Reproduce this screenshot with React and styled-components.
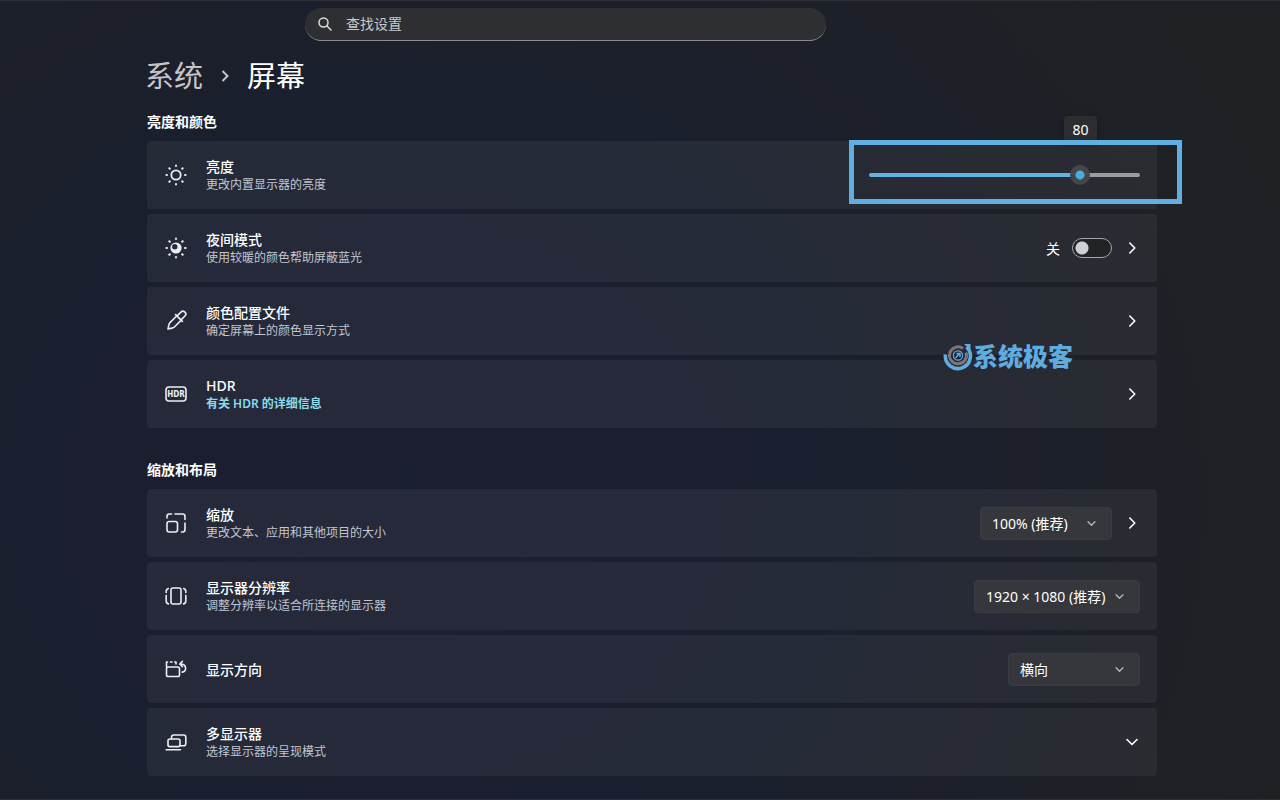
import React, { useState } from "react";
import styled, { createGlobalStyle, css } from "styled-components";

const GlobalStyle = createGlobalStyle`
  * {
    box-sizing: border-box;
  }

  body {
    margin: 0;
    background: #202124;
    color: #fff;
    font-family: "Noto Sans", "Noto Sans CJK SC", sans-serif;
    font-size: 14px;
  }

  button, input, select {
    font: inherit;
    color: inherit;
  }
`;

const Page = styled.div`
  min-height: 100vh;
  padding: 7px 123px 22px 147px;
  border-top: 1px solid #2d2f36;
  border-bottom: 1px solid #2d2f36;
  background: radial-gradient(ellipse 76% 108% at 32% 62%, #1a1e31 0%, #1a1f2f 42%, #1d2028 72%, #202124 100%);
`;

const SearchBar = styled.label`
  display: flex;
  align-items: center;
  gap: 13px;
  max-width: 521px;
  height: 33px;
  margin-left: 158px;
  padding: 0 12px;
  border-radius: 17px;
  border-bottom: 1px solid #8d8f93;
  background: #2d2f32;

  svg {
    flex: none;
    width: 16px;
    height: 16px;
  }

  input {
    flex: 1;
    min-width: 0;
    padding: 0 0 2px;
    border: 0;
    outline: 0;
    background: none;
  }

  input::placeholder {
    color: #c9cacc;
    opacity: 1;
  }
`;

const Breadcrumb = styled.nav`
  display: flex;
  align-items: center;
  gap: 17px;
  margin: 15px 0 0 -2px;
  font-size: 29px;
  line-height: 40px;

  a {
    color: #c4c5ca;
    text-decoration: none;
  }

  h1 {
    margin: 0;
    font-size: 29px;
    font-weight: 400;
  }

  svg {
    width: 10px;
    height: 14px;
    color: #c4c5ca;
  }
`;

const Section = styled.section`
  margin-top: ${props => props.$first ? "16px" : "32px"};

  h2 {
    margin: 0 0 9px;
    font-size: 14px;
    font-weight: 700;
    line-height: 20px;
  }
`;

const CardList = styled.div`
  display: flex;
  flex-direction: column;
  gap: 5px;
`;

const Card = styled.div`
  position: relative;
  display: flex;
  align-items: center;
  min-height: 68px;
  padding: 0 17px 0 18px;
  border-radius: 4px;
  background: rgba(250, 253, 255, 0.052);
`;

const CardIcon = styled.svg`
  flex: none;
  width: 22px;
  height: 22px;
  margin-right: 19px;
  fill: none;
  stroke: #eceef4;
  stroke-width: 1.6;
  stroke-linecap: round;
  stroke-linejoin: round;
`;

const CardText = styled.div`
  flex: 1;
  padding-top: 2px;
  line-height: 18px;

  h3 {
    margin: 0;
    font-size: 14px;
    font-weight: 500;
  }

  p, a {
    display: block;
    margin: 0;
    font-size: 12px;
    color: #c3c6cf;
  }

  a {
    color: #86dcee;
    font-weight: 600;
    text-decoration: none;
  }
`;

const Controls = styled.div`
  display: flex;
  align-items: center;
  gap: 12px;
`;

const IconButton = styled.button`
  display: flex;
  padding: 0;
  border: 0;
  background: none;
  cursor: pointer;

  svg {
    width: 16px;
    height: 16px;
  }
`;

const Toggle = styled.input`
  appearance: none;
  width: 40px;
  height: 20px;
  margin: 0;
  border: 1px solid #a3a4a7;
  border-radius: 10px;
  background: radial-gradient(circle at 9px 9px, #cfd0d3 6px, transparent 7px), #222327;

  &:checked {
    background: radial-gradient(circle at 28px 9px, #1b1b1b 6px, transparent 7px), #5fb4e3;
  }
`;

const ToggleLabel = styled.label`
  display: flex;
  align-items: center;
  gap: 12px;
`;

const Picker = styled.div`
  position: relative;

  select {
    appearance: none;
    min-width: 132px;
    height: 33px;
    padding: 0 ${props => props.$wide ? "33px" : "42px"} 0 11px;
    border: 1px solid #3b3c41;
    border-radius: 4px;
    background: #36373c;
    outline: 0;
  }

  svg {
    position: absolute;
    top: 11px;
    right: 15px;
    width: 11px;
    height: 11px;
    color: #b4b5ba;
    pointer-events: none;
  }
`;

const thumb = css`
  width: 20px;
  height: 20px;
  border: 0;
  border-radius: 50%;
  background: radial-gradient(circle, #4caadd 4px, #454648 5px);
`;

const SliderBox = styled.div`
  position: relative;
  display: flex;
  width: 271px;

  input {
    appearance: none;
    width: 100%;
    height: 20px;
    margin: 0;
    outline: 0;
    background: none;
  }

  input::-webkit-slider-runnable-track {
    height: 4px;
    border-radius: 2px;
    background: linear-gradient(to right, #5fb4e3 var(--value), #9b9ca0 var(--value));
  }

  input::-webkit-slider-thumb {
    appearance: none;
    margin-top: -8px;
    ${thumb}
  }

  input::-moz-range-thumb {
    ${thumb}
  }
`;

const ValueTip = styled.output`
  position: absolute;
  top: -49px;
  right: 43px;
  width: 33px;
  height: 28px;
  border-radius: 4px;
  background: #2c2d30;
  box-shadow: 0 2px 6px rgba(0, 0, 0, 0.25);
  line-height: 28px;
  text-align: center;
`;

const Highlight = styled.div`
  position: absolute;
  top: -25px;
  right: -42px;
  bottom: -19px;
  left: -20px;
  border: 5px solid #60afe1;
  pointer-events: none;
`;

const Watermark = styled.div`
  position: absolute;
  right: 84px;
  bottom: -17px;
  z-index: 1;
  display: flex;
  align-items: center;
  color: #5fade0;
  font-size: 25px;
  font-weight: 900;
  line-height: 32px;

  svg {
    width: 30px;
    height: 30px;
  }
`;

const Chevron = ({ down, width = 1.6 }) => (
  <svg viewBox="0 0 16 16" fill="none" stroke="currentColor" strokeWidth={width} strokeLinecap="round" strokeLinejoin="round" aria-hidden="true">
    <path d={down ? "M3 5.5l5 5 5-5" : "M5.8 3l5 5-5 5"} />
  </svg>
);

const Rays = () => (
  <path strokeWidth="2" d="M11 1.4v.6M11 20v.6M1.4 11h.6M20 11h.6M4.3 4.3l.5.5M17.2 17.2l.5.5M17.7 4.3l-.5.5M4.8 17.2l-.5.5" />
);

const icons = {
  brightness: (
    <>
      <circle cx="11" cy="11" r="4.7" strokeWidth="1.8" />
      <Rays />
    </>
  ),
  night: (
    <>
      <circle cx="11" cy="11" r="4.8" fill="#eceef4" />
      <circle cx="9.8" cy="9.7" r="2.7" fill="#262a39" stroke="none" />
      <Rays />
    </>
  ),
  picker: (
    <g transform="rotate(45 11 11)">
      <path d="M8.2 6.6V1.2a2.8 2.8 0 0 1 5.6 0v5.4M6.2 6.8h9.6M7.9 7v9.4c0 1 .3 1.6.9 2.5L11 22.4l2.2-3.5c.6-.9.9-1.5.9-2.5V7" />
    </g>
  ),
  hdr: (
    <>
      <rect x="1" y="4" width="20" height="14" rx="3" />
      <text x="11" y="14" textAnchor="middle" fontSize="8" fontWeight="700" fontFamily="Liberation Sans Narrow, DejaVu Sans Condensed, sans-serif" fill="#eceef4" stroke="none">HDR</text>
    </>
  ),
  scale: (
    <>
      <rect x="2" y="9.5" width="10.5" height="10.5" rx="2.2" />
      <path d="M2 6V4.4C2 3 3 2 4.4 2H6.5M10 2h7.6C19 2 20 3 20 4.4V7.5M20 11v6.6C20 19 19 20 17.6 20H16.5" />
    </>
  ),
  resolution: (
    <>
      <rect x="6" y="3" width="10" height="16" rx="2" />
      <path d="M3.4 3.5C2 3.8 1.2 4.8 1.2 6.4V7.5M1.2 10.5v5.6c0 1.5.8 2.5 2.2 2.8M18.6 3.5c1.4.3 2.2 1.3 2.2 2.9V7.5M20.8 10.5v5.6c0 1.5-.8 2.5-2.2 2.8" />
    </>
  ),
  orientation: (
    <>
      <rect x="1.5" y="9" width="13" height="9.500" rx="1.8" />
      <path d="M1.5 9V4H2.5M5.500 4h1.5M9.8 4H11V6M17.4 3.4L14.8 6l2.6 2.6M15.2 6c3.4 0 5.400 1.700 5.400 4.200 0 2.200-1.400 3.600-3.400 3.900" />
    </>
  ),
  displays: (
    <>
      <path d="M6.5 8V6.4C6.5 5 7.2 4 8.6 4h10c1.4 0 2.2.9 2.2 2.3v6.2c0 1.4-.8 2.3-2.2 2.3h-3.4" />
      <rect x="3" y="8" width="12" height="7.6" rx="1.8" />
      <path d="M1.2 18.8h14.2" />
    </>
  )
};

const Setting = ({ icon, title, note, link, children }) => (
  <Card>
    <CardIcon viewBox="0 0 22 22" aria-hidden="true">{icons[icon]}</CardIcon>
    <CardText>
      <h3>{title}</h3>
      {note && <p>{note}</p>}
      {link && <a href="#hdr">{link}</a>}
    </CardText>
    {children}
  </Card>
);

const Select = ({ label, options, wide }) => (
  <Picker $wide={wide}>
    <select aria-label={label}>
      {options.map(option => <option key={option}>{option}</option>)}
    </select>
    <Chevron down width={2} />
  </Picker>
);

const Open = ({ label, down }) => (
  <IconButton aria-label={label}><Chevron down={down} /></IconButton>
);

export default function App() {
  const [brightness, setBrightness] = useState(80);
  const [night, setNight] = useState(false);

  return (
    <>
      <GlobalStyle />
      <Page>
        <SearchBar>
          <svg viewBox="0 0 16 16" fill="none" stroke="#dcdde0" strokeWidth="1.5" strokeLinecap="round" aria-hidden="true">
            <circle cx="6.5" cy="6.5" r="4.5" />
            <path d="M10 10l4 4" />
          </svg>
          <input type="search" placeholder="查找设置" aria-label="查找设置" />
        </SearchBar>
        <Breadcrumb>
          <a href="#system">系统</a>
          <svg viewBox="0 0 10 14" fill="none" stroke="currentColor" strokeWidth="2" aria-hidden="true">
            <path d="M2.5 2l5 5-5 5" />
          </svg>
          <h1>屏幕</h1>
        </Breadcrumb>

        <Section $first>
          <h2>亮度和颜色</h2>
          <CardList>
            <Setting icon="brightness" title="亮度" note="更改内置显示器的亮度">
              <SliderBox>
                <ValueTip>{brightness}</ValueTip>
                <input
                  type="range"
                  aria-label="亮度"
                  value={brightness}
                  style={{ "--value": `${brightness}%` }}
                  onChange={e => setBrightness(e.target.value)}
                />
                <Highlight />
              </SliderBox>
            </Setting>
            <Setting icon="night" title="夜间模式" note="使用较暖的颜色帮助屏蔽蓝光">
              <Controls>
                <ToggleLabel>
                  {night ? "开" : "关"}
                  <Toggle type="checkbox" checked={night} onChange={() => setNight(!night)} />
                </ToggleLabel>
                <Open label="夜间模式" />
              </Controls>
            </Setting>
            <Setting icon="picker" title="颜色配置文件" note="确定屏幕上的颜色显示方式">
              <Open label="颜色配置文件" />
              <Watermark>
                <svg viewBox="0 0 30 30" fill="none" aria-hidden="true">
                  <path d="M2.5 13.5a12.500 12.500 0 1 0 21-7.500" stroke="#5fade0" strokeWidth="3.6" />
                  <path d="M21 3h6.500v6z" fill="#5fade0" />
                  <path d="M20 7.5a8.500 8.500 0 1 0 3 4" stroke="#7b7678" strokeWidth="3" />
                  <circle cx="15" cy="14.500" r="4.600" stroke="#5fade0" strokeWidth="1.3" />
                  <path d="M12.500 17l4-4.500M13.500 12.500h3.500v3.500" stroke="#5fade0" strokeWidth="1.500" />
                </svg>
                系统极客
              </Watermark>
            </Setting>
            <Setting icon="hdr" title="HDR" link="有关 HDR 的详细信息">
              <Open label="HDR" />
            </Setting>
          </CardList>
        </Section>

        <Section>
          <h2>缩放和布局</h2>
          <CardList>
            <Setting icon="scale" title="缩放" note="更改文本、应用和其他项目的大小">
              <Controls>
                <Select label="缩放" options={["100% (推荐)"]} />
                <Open label="缩放" />
              </Controls>
            </Setting>
            <Setting icon="resolution" title="显示器分辨率" note="调整分辨率以适合所连接的显示器">
              <Select label="显示器分辨率" options={["1920 × 1080 (推荐)"]} wide />
            </Setting>
            <Setting icon="orientation" title="显示方向">
              <Select label="显示方向" options={["横向", "纵向"]} />
            </Setting>
            <Setting icon="displays" title="多显示器" note="选择显示器的呈现模式">
              <Open label="多显示器" down />
            </Setting>
          </CardList>
        </Section>
      </Page>
    </>
  );
}
